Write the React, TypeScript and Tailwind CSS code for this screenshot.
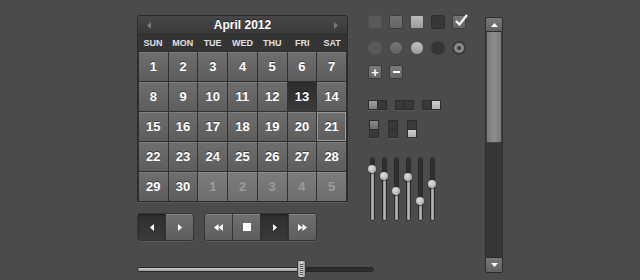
import React from "react";

type Kind = "normal" | "next" | "selected" | "today";

const rows: { d: number; k: Kind }[][] = [
  [1, 2, 3, 4, 5, 6, 7].map((d) => ({ d, k: "normal" as Kind })),
  [8, 9, 10, 11, 12, 13, 14].map((d) => ({ d, k: (d === 13 ? "selected" : "normal") as Kind })),
  [15, 16, 17, 18, 19, 20, 21].map((d) => ({ d, k: (d === 21 ? "today" : "normal") as Kind })),
  [22, 23, 24, 25, 26, 27, 28].map((d) => ({ d, k: "normal" as Kind })),
  [
    { d: 29, k: "normal" },
    { d: 30, k: "normal" },
    { d: 1, k: "next" },
    { d: 2, k: "next" },
    { d: 3, k: "next" },
    { d: 4, k: "next" },
    { d: 5, k: "next" },
  ],
];

const weekDays = ["SUN", "MON", "TUE", "WED", "THU", "FRI", "SAT"];

function DayCell({ d, k }: { d: number; k: Kind }) {
  const styles: Record<Kind, string> = {
    normal:
      "bg-[linear-gradient(#6e6e6e,#5d5d5d)] text-white shadow-[inset_0_1px_0_rgba(255,255,255,0.12)] [text-shadow:0_-1px_0_#3a3a3a]",
    next: "bg-[linear-gradient(#7c7c7c,#6e6e6e)] text-[#9c9c9c] shadow-[inset_0_1px_0_rgba(255,255,255,0.12)]",
    selected: "bg-[linear-gradient(#2c2c2c,#3a3a3a)] text-white [text-shadow:0_-1px_0_#111]",
    today:
      "bg-[linear-gradient(#6e6e6e,#5d5d5d)] text-white shadow-[inset_0_0_0_1px_#9a9a9a] [text-shadow:0_-1px_0_#3a3a3a]",
  };
  return (
    <div className={`h-[29px] flex items-center justify-center text-[13px] font-bold ${styles[k]}`}>{d}</div>
  );
}

function Tri({ dir, className = "fill-white" }: { dir: "l" | "r" | "u" | "d"; className?: string }) {
  if (dir === "u" || dir === "d")
    return (
      <svg width="7" height="4" viewBox="0 0 7 4" className={className}>
        <path d={dir === "u" ? "M0 4H7L3.5 0z" : "M0 0H7L3.5 4z"} />
      </svg>
    );
  return (
    <svg width="4" height="7" viewBox="0 0 4 7" className={className}>
      <path d={dir === "l" ? "M4 0V7L0 3.5z" : "M0 0V7L4 3.5z"} />
    </svg>
  );
}

function DoubleTri({ dir }: { dir: "l" | "r" }) {
  return (
    <svg width="9" height="7" viewBox="0 0 9 7" className="fill-white">
      <path d={dir === "l" ? "M4.5 0V7L0 3.5z M9 0V7L4.5 3.5z" : "M0 0V7L4.5 3.5z M4.5 0V7L9 3.5z"} />
    </svg>
  );
}

function Calendar() {
  return (
    <div className="w-[211px] rounded-t-[3px] bg-[#2f2f2f] border border-[#2a2a2a] shadow-[0_1px_0_rgba(255,255,255,0.08)]">
      <div className="h-[18px] flex items-center justify-between px-[9px] bg-[linear-gradient(#474747,#393939)] rounded-t-[3px]">
        <Tri dir="l" className="fill-[#7a7a7a]" />
        <span className="text-[12px] font-bold text-white leading-none [text-shadow:0_-1px_0_#222]">April 2012</span>
        <Tri dir="r" className="fill-[#7a7a7a]" />
      </div>
      <div className="h-[17px] grid grid-cols-7 items-center bg-[#343434] border-t border-[#2a2a2a]">
        {weekDays.map((w) => (
          <span key={w} className="text-center text-[9px] font-bold text-[#e0e0e0] leading-none">
            {w}
          </span>
        ))}
      </div>
      <div className="grid grid-cols-7 gap-px p-px pb-0 bg-[#303030]">
        {rows.flat().map((c, i) => (
          <DayCell key={i} d={c.d} k={c.k} />
        ))}
      </div>
    </div>
  );
}

function Btn({ dark, children }: { dark?: boolean; children: React.ReactNode }) {
  return (
    <div
      className={`w-[27px] h-full flex items-center justify-center ${
        dark
          ? "bg-[linear-gradient(#2e2e2e,#3a3a3a)] shadow-[inset_0_1px_2px_rgba(0,0,0,0.4)]"
          : "bg-[linear-gradient(#707070,#5e5e5e)] shadow-[inset_0_1px_0_rgba(255,255,255,0.15)]"
      }`}
    >
      {children}
    </div>
  );
}

function BtnGroup({ children }: { children: React.ReactNode }) {
  return (
    <div className="h-[28px] flex gap-px bg-[#353535] border border-[#353535] rounded-[3px] overflow-hidden shadow-[0_1px_0_rgba(255,255,255,0.08)]">
      {children}
    </div>
  );
}

function Checkbox({ c, children }: { c: string; children?: React.ReactNode }) {
  return <div className={`relative w-[14px] h-[14px] rounded-[2px] ${c}`}>{children}</div>;
}

function Radio({ c, children }: { c: string; children?: React.ReactNode }) {
  return <div className={`w-[14px] h-[14px] rounded-full flex items-center justify-center ${c}`}>{children}</div>;
}

function HToggle({ pos }: { pos: "l" | "m" | "r" }) {
  const knob = (on: boolean, light: string) => `flex-1 h-full ${on ? light : "bg-[#393939]"}`;
  return (
    <div className="w-[19px] h-[10px] flex gap-px bg-[#2c2c2c] border border-[#2c2c2c] shadow-[0_1px_0_rgba(255,255,255,0.08)]">
      <div className={knob(pos === "l", "bg-[linear-gradient(#a0a0a0,#7c7c7c)]")} />
      <div className={knob(pos === "r", "bg-[linear-gradient(#d0d0d0,#b0b0b0)]")} />
    </div>
  );
}

function VToggle({ pos }: { pos: "t" | "m" | "b" }) {
  return (
    <div className="w-[10px] h-[18px] flex flex-col gap-px bg-[#2c2c2c] border border-[#2c2c2c] shadow-[0_1px_0_rgba(255,255,255,0.08)]">
      <div className={`flex-1 ${pos === "t" ? "bg-[linear-gradient(#8a8a8a,#6c6c6c)]" : "bg-[#393939]"}`} />
      <div className={`flex-1 ${pos === "b" ? "bg-[linear-gradient(#d0d0d0,#adadad)]" : "bg-[#393939]"}`} />
    </div>
  );
}

function VSlider({ at }: { at: number }) {
  return (
    <div className="relative w-[8px] h-[64px] flex justify-center">
      <div className="w-[5px] h-full flex flex-col rounded-full overflow-hidden border border-[#2a2a2a]">
        <div className="bg-[#2f2f2f]" style={{ height: at }} />
        <div className="flex-1 bg-[linear-gradient(90deg,#8a8a8a,#b5b5b5,#8a8a8a)]" />
      </div>
      <div
        className="absolute left-0 w-[8px] h-[8px] rounded-full bg-[radial-gradient(circle_at_40%_35%,#e0e0e0,#9a9a9a)] shadow-[0_1px_1px_rgba(0,0,0,0.5)]"
        style={{ top: at - 4 }}
      />
    </div>
  );
}

function Controls() {
  return (
    <div className="flex flex-col">
      <div className="flex gap-[7px]">
        <Checkbox c="bg-[#5a5a5a] border border-[#505050]" />
        <Checkbox c="bg-[linear-gradient(#747474,#646464)] border border-[#3e3e3e]" />
        <Checkbox c="bg-[linear-gradient(#bcbcbc,#9c9c9c)] border border-[#4a4a4a]" />
        <Checkbox c="bg-[#373737] border border-[#2e2e2e]" />
        <Checkbox c="bg-[linear-gradient(#747474,#646464)] border border-[#3e3e3e]">
          <svg width="16" height="14" viewBox="0 0 16 14" className="absolute left-[1px] top-[-3px] overflow-visible">
            <path d="M2 8 L5.5 11.5 L13 2" fill="none" stroke="#f2f2f2" strokeWidth="2.4" />
          </svg>
        </Checkbox>
      </div>
      <div className="flex gap-[7px] mt-[12px]">
        <Radio c="bg-[#585858]" />
        <Radio c="bg-[linear-gradient(#767676,#626262)] border border-[#444]" />
        <Radio c="bg-[linear-gradient(#c0c0c0,#9c9c9c)] border border-[#4a4a4a]" />
        <Radio c="bg-[#363636]" />
        <Radio c="bg-[#3a3a3a]">
          <div className="w-[10px] h-[10px] rounded-full bg-[#8a8a8a] flex items-center justify-center">
            <div className="w-[4px] h-[4px] rounded-full bg-[#3a3a3a]" />
          </div>
        </Radio>
      </div>
      <div className="flex gap-[7px] mt-[10px]">
        <div className="w-[14px] h-[14px] rounded-[2px] bg-[linear-gradient(#7a7a7a,#666)] border border-[#3a3a3a] flex items-center justify-center text-white text-[13px] font-bold leading-none">
          +
        </div>
        <div className="w-[14px] h-[14px] rounded-[2px] bg-[linear-gradient(#7a7a7a,#666)] border border-[#3a3a3a] flex items-center justify-center">
          <div className="w-[7px] h-[2px] bg-white" />
        </div>
      </div>
      <div className="flex gap-[8px] mt-[21px]">
        <HToggle pos="l" />
        <HToggle pos="m" />
        <HToggle pos="r" />
      </div>
      <div className="flex gap-[9px] mt-[10px] ml-px">
        <VToggle pos="t" />
        <VToggle pos="m" />
        <VToggle pos="b" />
      </div>
      <div className="flex gap-[4px] mt-[19px]">
        {[12, 19, 34, 20, 44, 27].map((a, i) => (
          <VSlider key={i} at={a} />
        ))}
      </div>
    </div>
  );
}

function Scrollbar() {
  return (
    <div className="w-[16px] h-[254px] flex flex-col bg-[#333] border border-[#2c2c2c] box-content rounded-[2px] overflow-hidden">
      <div className="h-[14px] flex items-center justify-center bg-[linear-gradient(#787878,#626262)] border-b border-[#2c2c2c]">
        <Tri dir="u" />
      </div>
      <div className="h-[111px] bg-[linear-gradient(90deg,#7a7a7a,#8e8e8e,#7a7a7a)] border-x border-b border-[#444] rounded-b-[2px]" />
      <div className="flex-1 bg-[#363636]" />
      <div className="h-[15px] flex items-center justify-center bg-[linear-gradient(#787878,#626262)] border-t border-[#2c2c2c]">
        <Tri dir="d" />
      </div>
    </div>
  );
}

export default function App() {
  return (
    <div
      className="w-[640px] h-[280px] bg-[#4b4b4b] flex pl-[137px] pt-[15px]"
      style={{ fontFamily: '"Liberation Sans", Arial, sans-serif' }}
    >
      <div className="w-[330px] flex flex-col">
        <div className="flex gap-[20px]">
          <div className="flex flex-col">
            <Calendar />
            <div className="flex gap-[10px] mt-[11px]">
              <BtnGroup>
                <Btn dark>
                  <Tri dir="l" />
                </Btn>
                <Btn>
                  <Tri dir="r" />
                </Btn>
              </BtnGroup>
              <BtnGroup>
                <Btn>
                  <DoubleTri dir="l" />
                </Btn>
                <Btn>
                  <div className="w-[8px] h-[8px] bg-white" />
                </Btn>
                <Btn dark>
                  <Tri dir="r" />
                </Btn>
                <Btn>
                  <DoubleTri dir="r" />
                </Btn>
              </BtnGroup>
            </div>
          </div>
          <Controls />
        </div>
        <div className="relative w-[237px] h-[18px] mt-[19px]">
          <div className="absolute top-[7px] left-0 w-full h-[5px] rounded-full bg-[#2e2e2e] border border-[#262626] overflow-hidden">
            <div className="h-full w-[162px] bg-[linear-gradient(#cfcfcf,#9a9a9a)]" />
          </div>
          <div className="absolute left-[160px] top-0 w-[9px] h-[18px] rounded-[2px] bg-[linear-gradient(90deg,#9a9a9a,#d6d6d6,#9a9a9a)] border border-[#3a3a3a] flex flex-col justify-center gap-px px-[2px]">
            {[0, 1, 2, 3, 4, 5].map((i) => (
              <div key={i} className="h-px bg-[#555]" />
            ))}
          </div>
        </div>
      </div>
      <div className="ml-[18px] mt-[2px]">
        <Scrollbar />
      </div>
    </div>
  );
}
